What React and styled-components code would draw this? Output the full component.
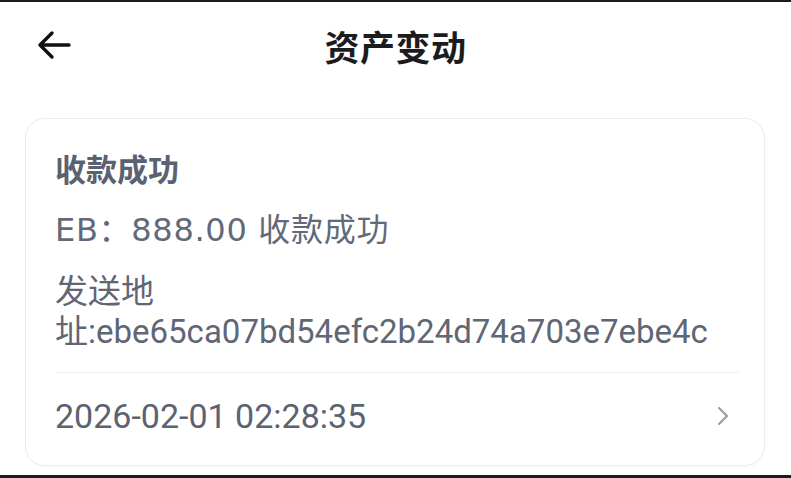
import React from 'react'
import styled, { createGlobalStyle } from 'styled-components'

const GlobalStyle = createGlobalStyle`
  html, body {
    margin: 0;
    padding: 0;
    background: #ffffff;
  }
  body {
    font-family: 'Noto Sans', 'Noto Sans CJK SC', sans-serif;
  }
`

const Page = styled.div`
  width: 791px;
  height: 478px;
  display: flex;
  flex-direction: column;
  background: #fff;
  overflow: hidden;
`

const Edge = styled.div`
  height: ${(p) => p.$h}px;
  background: #1b1b1b;
  flex-shrink: 0;
`

const Main = styled.main`
  flex: 1;
  display: flex;
  flex-direction: column;
`

const Header = styled.header`
  height: 86px;
  display: grid;
  grid-template-columns: 1fr auto 1fr;
  align-items: center;
  padding: 0 36px;
`

const BackButton = styled.button`
  justify-self: start;
  display: flex;
  align-items: center;
  justify-content: center;
  width: 36px;
  height: 36px;
  padding: 0;
  border: none;
  background: none;
  color: #111;
`

const Title = styled.h1`
  margin: 0;
  font-family: 'Noto Sans CJK SC', sans-serif;
  font-size: 35px;
  font-weight: 700;
  color: #1c1c1e;
  letter-spacing: 0.5px;
`

const Card = styled.section`
  margin: 30px 26px 0 25px;
  border: 1px solid #ececec;
  border-radius: 20px;
  box-shadow: 0 1px 3px rgba(0, 0, 0, 0.03);
  padding: 27px 25px 0 29px;
`

const CardTitle = styled.h2`
  margin: 0;
  font-family: 'Noto Sans CJK SC', sans-serif;
  font-size: 31px;
  line-height: 44px;
  font-weight: 700;
  color: #5a6170;
`

const Amount = styled.div`
  margin-top: 18px;
  font-family: 'DejaVu Sans', 'Noto Sans CJK SC', sans-serif;
  font-size: 32px;
  line-height: 44px;
  letter-spacing: 0.7px;
  color: #626978;
`

const Address = styled.div`
  margin-top: 20px;
  font-family: Roboto, 'Noto Sans CJK SC', sans-serif;
  font-size: 33px;
  line-height: 40px;
  color: #5f6674;
  padding-right: 14px;
  word-break: normal;
`

const Divider = styled.hr`
  margin: 20px 0 0;
  border: none;
  border-top: 1px solid #efefef;
`

const DateRow = styled.div`
  display: flex;
  align-items: center;
  justify-content: space-between;
  padding: 22px 0 28px;
`

const DateText = styled.span`
  font-family: Roboto, sans-serif;
  font-size: 34px;
  line-height: 42px;
  color: #5c6270;
`

const Chevron = styled.span`
  display: flex;
  margin-right: 10px;
  color: #9a9ea6;
`

export default function App() {
  return (
    <Page>
      <GlobalStyle />
      <Edge $h={2} />
      <Main>
        <Header>
          <BackButton aria-label='back'>
            <svg width='34' height='30' viewBox='0 0 34 30' fill='none'>
              <path
                d='M32 15H4M15 3L3 15l12 12'
                stroke='currentColor'
                strokeWidth='3.4'
                strokeLinecap='round'
                strokeLinejoin='round'
              />
            </svg>
          </BackButton>
          <Title>资产变动</Title>
          <span />
        </Header>
        <Card>
          <CardTitle>收款成功</CardTitle>
          <Amount>EB：888.00 收款成功</Amount>
          <Address>发送地址:ebe65ca07bd54efc2b24d74a703e7ebe4c</Address>
          <Divider />
          <DateRow>
            <DateText>2026-02-01 02:28:35</DateText>
            <Chevron>
              <svg width='12' height='20' viewBox='0 0 12 20' fill='none'>
                <path
                  d='M2 2l8 8-8 8'
                  stroke='currentColor'
                  strokeWidth='2.2'
                  strokeLinecap='round'
                  strokeLinejoin='round'
                />
              </svg>
            </Chevron>
          </DateRow>
        </Card>
      </Main>
      <Edge $h={3} />
    </Page>
  )
}
